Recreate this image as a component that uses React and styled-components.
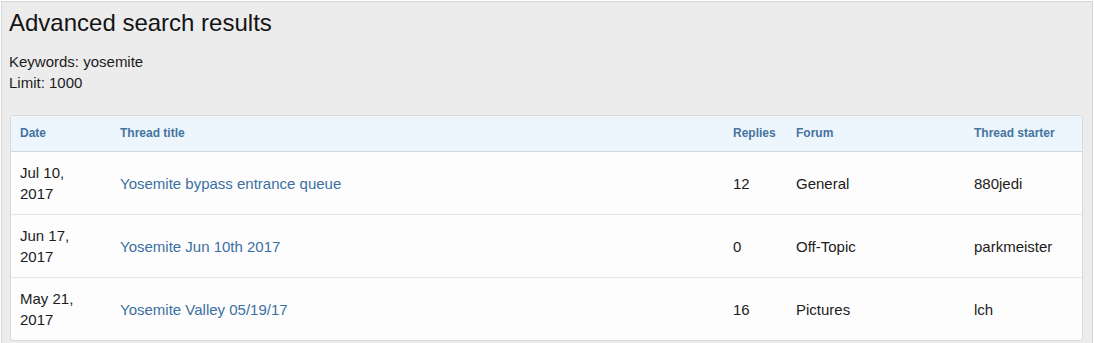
import React from "react";
import styled, { createGlobalStyle } from "styled-components";

const Global = createGlobalStyle`
  html, body { margin: 0; padding: 0; background: #ffffff; }
  body { font-family: "Liberation Sans", Arial, Helvetica, sans-serif; color: #1c1c1c; }
`;

const Page = styled.div`
  width: 1094px;
  height: 343px;
  overflow: hidden;
  padding: 1px 1px 0 1px;
  box-sizing: border-box;
`;

const Frame = styled.div`
  height: 360px;
  box-sizing: border-box;
  border: 1px solid #d6d6d6;
  background: #ececec;
  padding: 8px 9px 0 8px;
`;

const Title = styled.h1`
  margin: 0 0 15px -1px;
  font-size: 24px;
  line-height: 26px;
  font-weight: normal;
  color: #141414;
`;

const Meta = styled.div`
  font-size: 15px;
  line-height: 21px;
  color: #1c1c1c;
  margin: 0 0 22px -1px;
`;

const Panel = styled.div`
  background: #fdfdfd;
  border: 1px solid #d9d9d9;
  border-radius: 3px;
  overflow: hidden;
`;

const Table = styled.table`
  width: 100%;
  border-collapse: collapse;
  table-layout: fixed;
`;

const HeadRow = styled.tr`
  background: #edf6fd;
  border-bottom: 1px solid #cfd8e0;
`;

const Th = styled.th`
  text-align: left;
  font-size: 12px;
  line-height: 14px;
  font-weight: bold;
  color: #4573a0;
  padding: 10px 8px 11px 9px;
  white-space: nowrap;
`;

const Row = styled.tr`
  border-bottom: ${(p) => (p.$last ? "none" : "1px solid #e6e6e6")};
`;

const Td = styled.td`
  font-size: 15px;
  line-height: 21px;
  color: #1c1c1c;
  padding: ${(p) => (p.$date ? "10px 30px 10px 9px" : "10px 8px 10px 9px")};
  vertical-align: middle;
`;

const Link = styled.a`
  color: #3c70a2;
  text-decoration: none;
  cursor: pointer;
`;

const rows = [
  { date: "Jul 10, 2017", title: "Yosemite bypass entrance queue", replies: "12", forum: "General", starter: "880jedi" },
  { date: "Jun 17, 2017", title: "Yosemite Jun 10th 2017", replies: "0", forum: "Off-Topic", starter: "parkmeister" },
  { date: "May 21, 2017", title: "Yosemite Valley 05/19/17", replies: "16", forum: "Pictures", starter: "lch" },
];

export default function App() {
  return (
    <Page>
      <Global />
      <Frame>
        <Title>Advanced search results</Title>
        <Meta>
          <div>Keywords: yosemite</div>
          <div>Limit: 1000</div>
        </Meta>
        <Panel>
          <Table>
            <colgroup>
              <col style={{ width: "100px" }} />
              <col />
              <col style={{ width: "63px" }} />
              <col style={{ width: "178px" }} />
              <col style={{ width: "117px" }} />
            </colgroup>
            <thead>
              <HeadRow>
                <Th>Date</Th>
                <Th>Thread title</Th>
                <Th>Replies</Th>
                <Th>Forum</Th>
                <Th>Thread starter</Th>
              </HeadRow>
            </thead>
            <tbody>
              {rows.map((r, i) => (
                <Row key={i} $last={i === rows.length - 1}>
                  <Td $date>{r.date}</Td>
                  <Td><Link>{r.title}</Link></Td>
                  <Td>{r.replies}</Td>
                  <Td>{r.forum}</Td>
                  <Td>{r.starter}</Td>
                </Row>
              ))}
            </tbody>
          </Table>
        </Panel>
      </Frame>
    </Page>
  );
}
